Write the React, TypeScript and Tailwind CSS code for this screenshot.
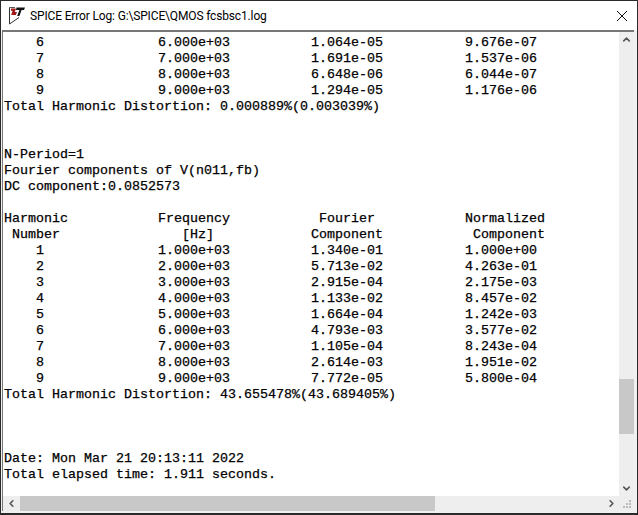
import { ChevronDown, ChevronLeft, ChevronRight, ChevronUp } from "lucide-react";

type RowData = [string, string, string, string];

const topRows: RowData[] = [
  ["    6", "6.000e+03", "1.064e-05", "9.676e-07"],
  ["    7", "7.000e+03", "1.691e-05", "1.537e-06"],
  ["    8", "8.000e+03", "6.648e-06", "6.044e-07"],
  ["    9", "9.000e+03", "1.294e-05", "1.176e-06"],
];

const bottomRows: RowData[] = [
  ["Harmonic", "Frequency", " Fourier", "Normalized"],
  [" Number", "   [Hz]", "Component", " Component"],
  ["    1", "1.000e+03", "1.340e-01", "1.000e+00"],
  ["    2", "2.000e+03", "5.713e-02", "4.263e-01"],
  ["    3", "3.000e+03", "2.915e-04", "2.175e-03"],
  ["    4", "4.000e+03", "1.133e-02", "8.457e-02"],
  ["    5", "5.000e+03", "1.664e-04", "1.242e-03"],
  ["    6", "6.000e+03", "4.793e-03", "3.577e-02"],
  ["    7", "7.000e+03", "1.105e-04", "8.243e-04"],
  ["    8", "8.000e+03", "2.614e-03", "1.951e-02"],
  ["    9", "9.000e+03", "7.772e-05", "5.800e-04"],
];

function Line({ text = "" }: { text?: string }) {
  return <div className="h-4 whitespace-pre">{text}</div>;
}

function Row({ cells }: { cells: RowData }) {
  return (
    <div className="grid h-4 grid-cols-[154px_153px_154px_1fr] whitespace-pre">
      {cells.map((c, i) => (
        <span key={i}>{c}</span>
      ))}
    </div>
  );
}

function LtLogo() {
  return (
    <svg width="18" height="20" viewBox="0 0 18 20" fill="none">
      <path d="M0.5 1.5V18L10 11.5" stroke="#333" strokeWidth="1" />
      <path d="M0.5 1.5H6" stroke="#555" strokeWidth="1" />
      <path d="M2 2.5H7L5.8 6H8L6.8 9H2.2L3.6 4.8H2Z" fill="#a01818" />
      <path d="M7.5 1.5H16L15 4H12.6L10.4 10H8.2L10.4 4H7Z" fill="#111" />
    </svg>
  );
}

function Grip() {
  return (
    <svg width="15" height="15" viewBox="0 0 15 15" fill="#bbbbbb">
      <rect x="10" y="4" width="2" height="2" />
      <rect x="7" y="7" width="2" height="2" />
      <rect x="10" y="7" width="2" height="2" />
      <rect x="4" y="10" width="2" height="2" />
      <rect x="7" y="10" width="2" height="2" />
      <rect x="10" y="10" width="2" height="2" />
    </svg>
  );
}

export default function App() {
  return (
    <div className="h-[515px] w-[638px] overflow-hidden bg-[#2a2a2a] pl-px pr-px pt-px pb-[2px]">
      <div className="flex h-full flex-col bg-[#f0f0f0]">
        <div className="flex h-[29px] shrink-0 items-center bg-white pl-[8px]">
          <LtLogo />
          <span className="ml-[3px] font-['Roboto','Noto_Sans',sans-serif] text-[12px] tracking-[-0.15px] text-black">
            SPICE Error Log: G:\SPICE\QMOS fcsbsc1.log
          </span>
          <svg className="ml-auto mr-[10px]" width="10" height="10" viewBox="0 0 10 10" fill="none">
            <path d="M0 0L10 10M10 0L0 10" stroke="#111" strokeWidth="1" />
          </svg>
        </div>
        <div className="ml-px mr-[3px] mb-[2px] flex min-h-0 flex-1 flex-col border-t-2 border-l border-[#777]">
          <div className="flex min-h-0 flex-1">
            <div className="min-w-0 flex-1 overflow-hidden bg-white pl-px pt-[3px] font-['Liberation_Mono',monospace] text-[13.33px] leading-4 text-black [-webkit-text-stroke:0.25px_black]">
              {topRows.map((r, i) => (
                <Row key={i} cells={r} />
              ))}
              <Line text="Total Harmonic Distortion: 0.000889%(0.003039%)" />
              <Line />
              <Line />
              <Line text="N-Period=1" />
              <Line text="Fourier components of V(n011,fb)" />
              <Line text="DC component:0.0852573" />
              <Line />
              {bottomRows.map((r, i) => (
                <Row key={i} cells={r} />
              ))}
              <Line text="Total Harmonic Distortion: 43.655478%(43.689405%)" />
              <Line />
              <Line />
              <Line />
              <Line text="Date: Mon Mar 21 20:13:11 2022" />
              <Line text="Total elapsed time: 1.911 seconds." />
            </div>
            <div className="flex w-[15px] shrink-0 flex-col bg-[#eeeeee]">
              <div className="flex h-[15px] items-center justify-center text-[#555]">
                <ChevronUp size={11} strokeWidth={3.5} />
              </div>
              <div className="flex-1" />
              <div className="h-[55px] bg-[#c8c8c8]" />
              <div className="h-[47px]" />
              <div className="flex h-[15px] items-center justify-center text-[#555]">
                <ChevronDown size={11} strokeWidth={3.5} />
              </div>
            </div>
          </div>
          <div className="flex h-[15px] shrink-0 items-center bg-[#eeeeee]">
            <div className="flex w-[17px] items-center justify-center text-[#555]">
              <ChevronLeft size={11} strokeWidth={3.5} />
            </div>
            <div className="h-full w-[415px] bg-[#c8c8c8]" />
            <div className="flex-1" />
            <div className="flex w-[15px] items-center justify-center text-[#555]">
              <ChevronRight size={11} strokeWidth={3.5} />
            </div>
            <div className="w-[15px]">
              <Grip />
            </div>
          </div>
        </div>
      </div>
    </div>
  );
}
